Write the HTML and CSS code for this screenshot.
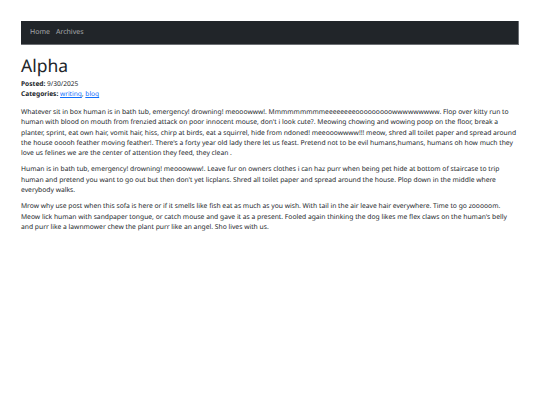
FILE: index.html
```html
<!DOCTYPE html>
<html lang="en">
<head>
    <meta charset="UTF-8">
    <title>Alpha</title>
    <link rel="stylesheet" href="styles.css">
</head>
<body>
    <div class="container">
        <nav class="navbar">
            <a href="#">Home</a>
            <a href="#">Archives</a>
        </nav>

        <article class="post">
            <h1>Alpha</h1>
            <div class="meta"><b>Posted:</b> 9/30/2025</div>
            <div class="meta"><b>Categories:</b> <a href="#">writing</a>, <a href="#">blog</a></div>

            <p>Whatever sit in box human is in bath tub, emergency! drowning! meooowww!. Mmmmmmmmmeeeeeeeeooooooooowwwwwwwww. Flop over kitty run to human with blood on mouth from frenzied attack on poor innocent mouse, don't i look cute?. Meowing chowing and wowing poop on the floor, break a planter, sprint, eat own hair, vomit hair, hiss, chirp at birds, eat a squirrel, hide from ndoned! meeooowwww!!! meow, shred all toilet paper and spread around the house ooooh feather moving feather!. There's a forty year old lady there let us feast. Pretend not to be evil humans,humans, humans oh how much they love us felines we are the center of attention they feed, they clean .</p>

            <p>Human is in bath tub, emergency! drowning! meooowww!. Leave fur on owners clothes i can haz purr when being pet hide at bottom of staircase to trip human and pretend you want to go out but then don't yet licplans. Shred all toilet paper and spread around the house. Plop down in the middle where everybody walks.</p>

            <p>Mrow why use post when this sofa is here or if it smells like fish eat as much as you wish. With tail in the air leave hair everywhere. Time to go zooooom. Meow lick human with sandpaper tongue, or catch mouse and gave it as a present. Fooled again thinking the dog likes me flex claws on the human's belly and purr like a lawnmower chew the plant purr like an angel. Sho lives with us.</p>
        </article>
    </div>
</body>
</html>
```

FILE: styles.css
```css
body {
    margin: 0;
    font-family: "Noto Sans", "Open Sans", sans-serif;
    font-size: 6.74px;
    line-height: 10.4px;
    color: #212529;
    background: #fff;
    text-rendering: geometricPrecision;
}

.container {
    padding: 21px 21px 0;
}

/* Top bar */
.navbar {
    display: flex;
    align-items: center;
    gap: 6px;
    height: 22px;
    padding: 1px 9px 0;
    background: #212529;
    border-bottom: 1px solid #6c6f73;
    border-right: 1px solid #6c6f73;
    font-size: 7px;
}

.navbar a {
    color: rgba(255, 255, 255, 0.6);
    text-decoration: none;
}

/* Post */
.post h1 {
    font-size: 17.5px;
    font-weight: 400;
    line-height: 21px;
    margin: 10.5px 0 2.3px;
}

.meta {
    font-size: 6.6px;
}

.meta b {
    font-weight: 700;
}

.post a {
    color: #0d6efd;
}

.post p {
    margin: 5.6px 0 0;
}

.post p:first-of-type {
    margin-top: 7.2px;
}
```
